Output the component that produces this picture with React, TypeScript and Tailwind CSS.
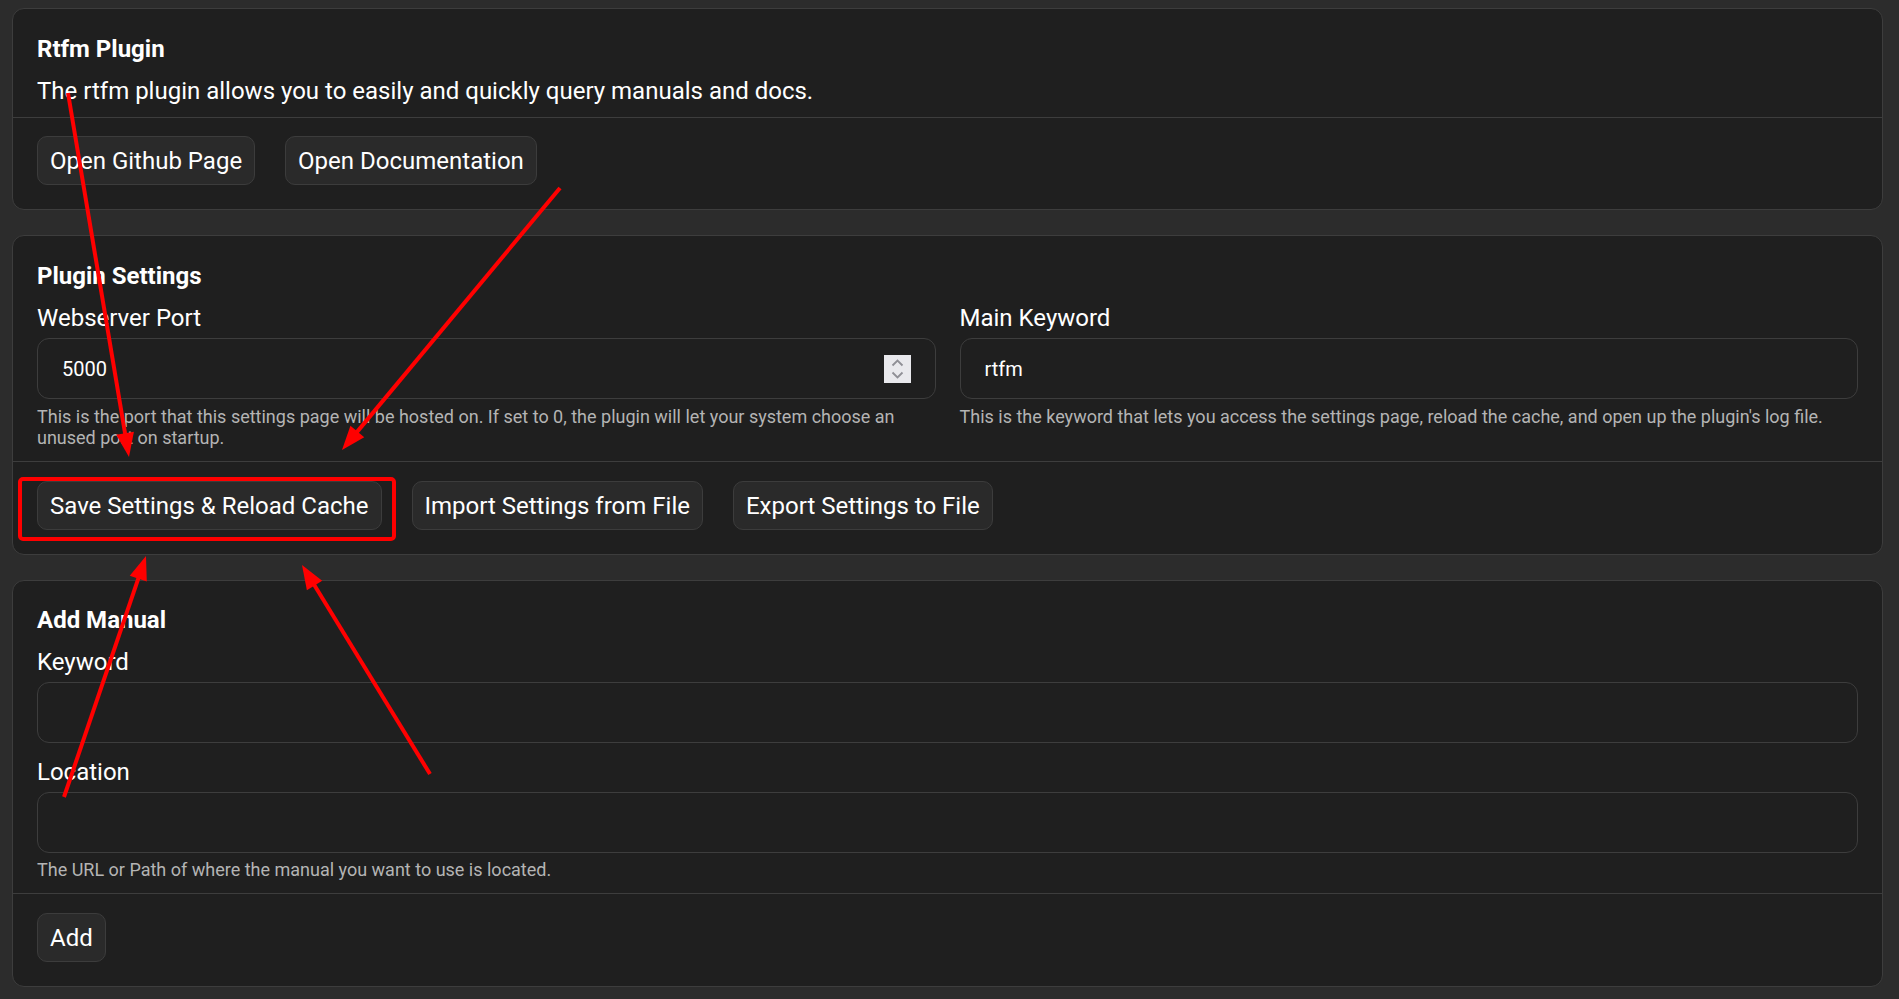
import React from "react";

function Button({ children }: { children: React.ReactNode }) {
  return (
    <button className="h-[49px] rounded-[10px] border border-[#3c3c3c] bg-[#2a2a2a] px-[12px] text-[24px] leading-[28px] text-white">
      {children}
    </button>
  );
}

function Title({ children }: { children: React.ReactNode }) {
  return <div className="text-[24px] font-bold leading-[28px] text-white">{children}</div>;
}

function Label({ children, className = "mt-[14px]" }: { children: React.ReactNode; className?: string }) {
  return <div className={"text-[24px] leading-[28px] text-white " + className}>{children}</div>;
}

function Help({ children, className = "" }: { children: React.ReactNode; className?: string }) {
  return <div className={"text-[18px] leading-[21px] text-[#b4b4b4] " + className}>{children}</div>;
}

function TextBox({ value = "", spinner = false }: { value?: string; spinner?: boolean }) {
  return (
    <div className="mt-[6px] flex h-[61px] items-center rounded-[12px] border border-[#3d3d3d] bg-[#1f1f1f] px-[24px]">
      <input
        readOnly
        value={value}
        className="min-w-0 flex-1 bg-transparent text-[20px] text-white outline-none"
      />
      {spinner && (
        <div className="h-[28px] w-[27px] bg-[#e9e9ed]">
          <svg width="27" height="28" viewBox="0 0 27 28">
            <polyline points="8.5,10.5 13.5,5.5 18.5,10.5" fill="none" stroke="#8f8f96" strokeWidth="1.8" />
            <polyline points="8.5,17.5 13.5,22.5 18.5,17.5" fill="none" stroke="#8f8f96" strokeWidth="1.8" />
          </svg>
        </div>
      )}
    </div>
  );
}

function Arrow({ x1, y1, x2, y2 }: { x1: number; y1: number; x2: number; y2: number }) {
  const dx = x2 - x1;
  const dy = y2 - y1;
  const len = Math.sqrt(dx * dx + dy * dy);
  const ux = dx / len;
  const uy = dy / len;
  const L = 24;
  const W = 9;
  const bx = x2 - ux * L;
  const by = y2 - uy * L;
  const px = -uy;
  const py = ux;
  const pts = `${x2},${y2} ${bx + px * W},${by + py * W} ${bx - px * W},${by - py * W}`;
  return (
    <g>
      <line x1={x1} y1={y1} x2={bx + ux * 4} y2={by + uy * 4} stroke="#ff0000" strokeWidth="4" />
      <polygon points={pts} fill="#ff0000" />
    </g>
  );
}

export default function App() {
  return (
    <div className="relative min-h-[999px] w-full bg-[#2c2c2c] pb-[12px] pl-[12px] pr-[16px] pt-[8px] [font-family:Roboto,sans-serif]">
      <div className="flex flex-col gap-[25px]">
        {/* Card 1 */}
        <div className="rounded-[12px] border border-[#3d3d3d] bg-[#1f1f1f]">
          <div className="px-[24px] pb-[12px] pt-[26px]">
            <Title>Rtfm Plugin</Title>
            <div className="mt-[14px] text-[24px] leading-[28px] text-white">
              The rtfm plugin allows you to easily and quickly query manuals and docs.
            </div>
          </div>
          <div className="flex gap-[30px] border-t border-[#3d3d3d] px-[24px] pb-[24px] pt-[18px]">
            <Button>Open Github Page</Button>
            <Button>Open Documentation</Button>
          </div>
        </div>

        {/* Card 2 */}
        <div className="rounded-[12px] border border-[#3d3d3d] bg-[#1f1f1f]">
          <div className="px-[24px] pb-[13px] pt-[26px]">
            <Title>Plugin Settings</Title>
            <div className="grid grid-cols-2 gap-x-[24px]">
              <div>
                <Label>Webserver Port</Label>
                <TextBox value="5000" spinner />
                <Help className="mt-[7px]">
                  This is the port that this settings page will be hosted on. If set to 0, the plugin will let your system choose an unused port on startup.
                </Help>
              </div>
              <div>
                <Label>Main Keyword</Label>
                <TextBox value="rtfm" />
                <Help className="mt-[7px]">
                  This is the keyword that lets you access the settings page, reload the cache, and open up the plugin's log file.
                </Help>
              </div>
            </div>
          </div>
          <div className="flex gap-[30px] border-t border-[#3d3d3d] px-[24px] pb-[24px] pt-[19px]">
            <Button>Save Settings &amp; Reload Cache</Button>
            <Button>Import Settings from File</Button>
            <Button>Export Settings to File</Button>
          </div>
        </div>

        {/* Card 3 */}
        <div className="rounded-[12px] border border-[#3d3d3d] bg-[#1f1f1f]">
          <div className="px-[24px] pb-[13px] pt-[25px]">
            <Title>Add Manual</Title>
            <Label>Keyword</Label>
            <TextBox />
            <Label className="mt-[15px]">Location</Label>
            <TextBox />
            <Help className="mt-[6px]">The URL or Path of where the manual you want to use is located.</Help>
          </div>
          <div className="flex border-t border-[#3d3d3d] px-[24px] pb-[24px] pt-[19px]">
            <Button>Add</Button>
          </div>
        </div>
      </div>

      {/* Annotation overlay */}
      <svg
        className="pointer-events-none absolute left-0 top-0"
        width="1899"
        height="999"
        viewBox="0 0 1899 999"
      >
        <rect x="20" y="479" width="374" height="60" rx="3" fill="none" stroke="#ff0000" strokeWidth="4" />
        <Arrow x1={68} y1={93} x2={129} y2={457} />
        <Arrow x1={560} y1={188} x2={342} y2={450} />
        <Arrow x1={64} y1={797} x2={146} y2={556} />
        <Arrow x1={430} y1={774} x2={302} y2={565} />
      </svg>
    </div>
  );
}
